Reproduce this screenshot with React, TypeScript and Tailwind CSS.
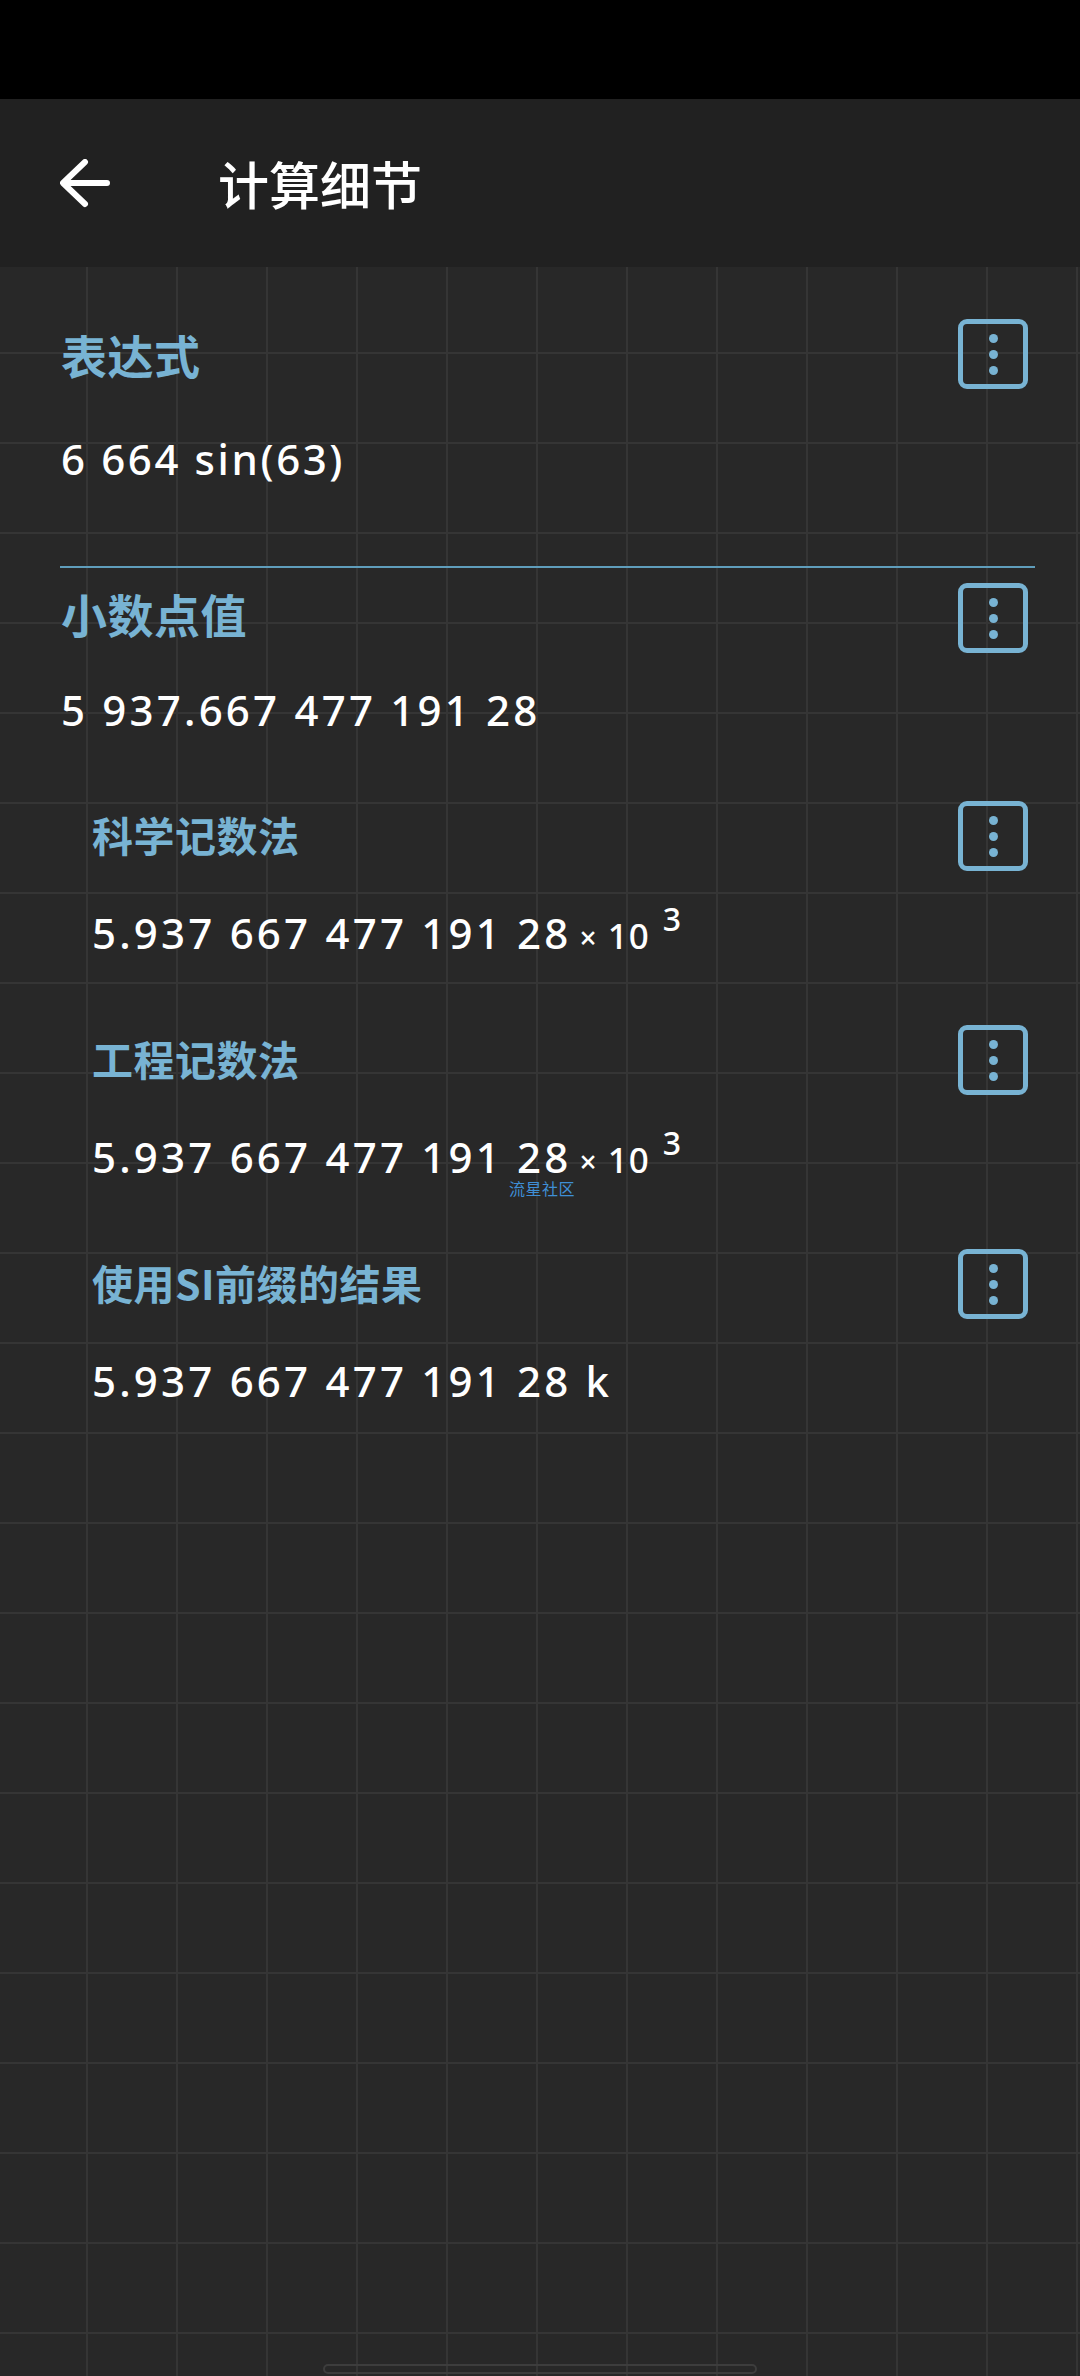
const FONT = "font-['Noto_Sans','Noto_Sans_CJK_SC',sans-serif]";
const HEADING = "font-['Noto_Sans_CJK_SC',sans-serif] font-bold leading-none tracking-[0.5px] text-[#78b3d3]";

function MenuButton() {
  return (
    <button className="flex h-[70px] w-[70px] shrink-0 flex-col items-center justify-center gap-[7px] rounded-[9px] border-[5px] border-[#78b3d3]">
      <span className="h-[9px] w-[9px] rounded-full bg-[#78b3d3]" />
      <span className="h-[9px] w-[9px] rounded-full bg-[#78b3d3]" />
      <span className="h-[9px] w-[9px] rounded-full bg-[#78b3d3]" />
    </button>
  );
}

function Times() {
  return (
    <span className="ml-[8px] text-[35px] tracking-[1px]">
      <span className="text-[30px]">×</span> 10<sup className="-top-[18px] ml-[13px] text-[32px] leading-none">3</sup>
    </span>
  );
}

function SubSection({ title, children }: { title: string; children: React.ReactNode }) {
  return (
    <section>
      <div className="flex h-[70px] items-center justify-between pl-[92px] pr-[52px]">
        <h3 className={`pb-[4px] text-[41px] ${HEADING}`}>{title}</h3>
        <MenuButton />
      </div>
      <p className="h-[154px] whitespace-nowrap pl-[92px] pt-[41px] text-[42px] font-medium leading-[42px] tracking-[3.2px] text-white">
        {children}
      </p>
    </section>
  );
}

export default function App() {
  return (
    <div className={`relative flex h-[2376px] w-[1080px] flex-col overflow-hidden bg-black ${FONT}`}>
      <div className="h-[99px] shrink-0" />
      <header className="flex h-[168px] shrink-0 items-center bg-[#212121] pl-[60px]">
        <svg className="mt-[2px]" width="50" height="50" viewBox="0 0 50 50" fill="none" stroke="white" strokeWidth="6" strokeLinecap="round" strokeLinejoin="round">
          <path d="M47 24H4M25 3 3 24l22 21" />
        </svg>
        <h1 className="ml-[108px] mt-[4px] text-[51px] font-medium leading-none text-white">计算细节</h1>
      </header>

      <main className="flex-1 bg-[#282828] bg-[linear-gradient(#353535_2px,transparent_2px),linear-gradient(90deg,#353535_2px,transparent_2px)] bg-[size:90px_90px] bg-[position:86px_85px]">
        <section>
          <div className="mt-[52px] flex h-[70px] items-center justify-between pl-[61px] pr-[52px]">
            <h2 className={`pb-[1px] text-[46px] ${HEADING}`}>表达式</h2>
            <MenuButton />
          </div>
          <p className="mt-[45px] pl-[61px] text-[42px] font-medium leading-[50px] tracking-[2.6px] text-white">6 664 sin(63)</p>
        </section>

        <div className="ml-[60px] mr-[45px] mt-[82px] h-[2px] bg-[#5f9dbb]" />

        <section>
          <div className="mt-[15px] flex h-[70px] items-center justify-between pl-[61px] pr-[52px]">
            <h2 className={`pb-[11px] text-[46px] ${HEADING}`}>小数点值</h2>
            <MenuButton />
          </div>
          <p className="mt-[32px] h-[116px] pl-[61px] text-[42px] font-medium leading-[50px] tracking-[3.2px] text-white">5 937.667 477 191 28</p>
        </section>

        <SubSection title="科学记数法">
          5.937 667 477 191 28<Times />
        </SubSection>
        <SubSection title="工程记数法">
          5.937 667 477 191 28<Times />
        </SubSection>
        <SubSection title="使用SI前缀的结果">5.937 667 477 191 28 k</SubSection>
      </main>

      <span className="absolute left-[509px] top-[1180px] text-[16px] leading-[18px] tracking-[0.5px] text-[#3f8fd6]">流星社区</span>
      <div className="absolute left-[323px] top-[2364px] h-[10px] w-[434px] rounded-full border-2 border-[#3d3d3d]" />
    </div>
  );
}
